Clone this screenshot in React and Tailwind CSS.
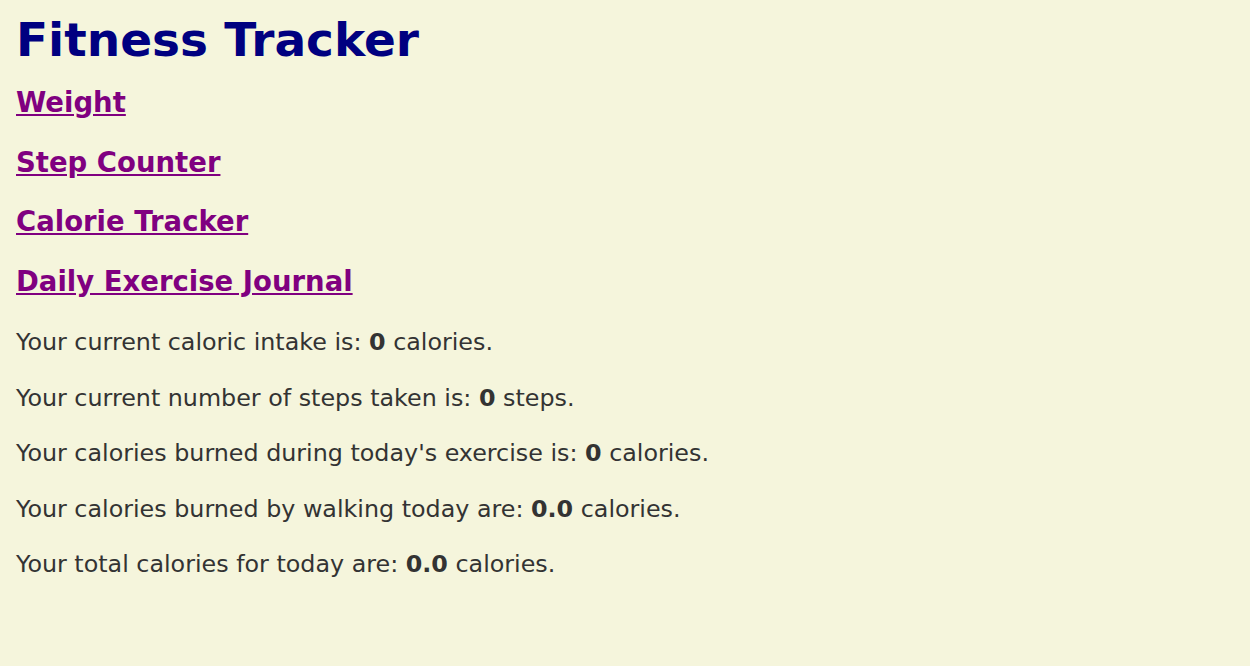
import React from 'react';

const LINKS = ['Weight', 'Step Counter', 'Calorie Tracker', 'Daily Exercise Journal'];

const STATS = [
  ['Your current caloric intake is: ', '0', ' calories.'],
  ['Your current number of steps taken is: ', '0', ' steps.'],
  ["Your calories burned during today's exercise is: ", '0', ' calories.'],
  ['Your calories burned by walking today are: ', '0.0', ' calories.'],
  ['Your total calories for today are: ', '0.0', ' calories.'],
];

const App = () => {
  return (
    <div className="min-h-screen bg-[#f5f5dc] px-4 pt-[12px] font-['DejaVu_Sans',Verdana,sans-serif]">
      <h1 className="text-[47px] font-bold text-[#000080] leading-[56px]">Fitness Tracker</h1>

      <div className="mt-[18px]">
        {LINKS.map((l) => (
          <h3 key={l} className="text-[27.5px] font-bold leading-[32px] mb-[27.5px]">
            <a href="#" className="text-[#800080] underline">{l}</a>
          </h3>
        ))}
      </div>

      <div className="pt-[4px] text-[23.8px] text-[#333] leading-[28px]">
        {STATS.map(([a, b, c]) => (
          <p key={a} className="mb-[27.5px]">
            {a}<b>{b}</b>{c}
          </p>
        ))}
      </div>
    </div>
  );
};

export default App;
